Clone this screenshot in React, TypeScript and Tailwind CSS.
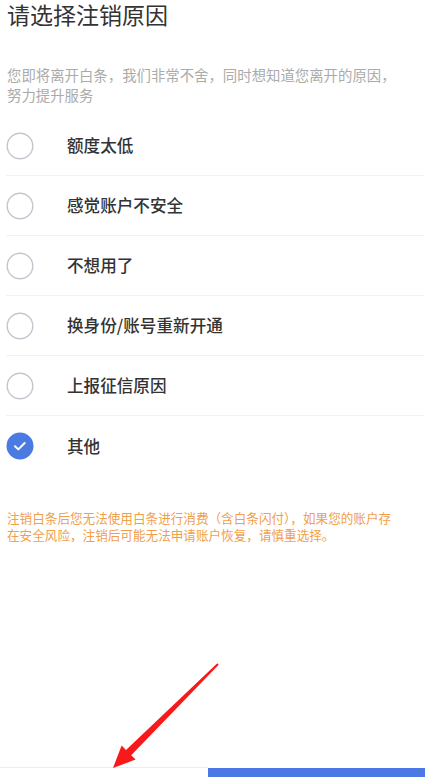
import { useState } from 'react';

const reasons = ['额度太低', '感觉账户不安全', '不想用了', '换身份/账号重新开通', '上报征信原因', '其他'];

function Radio({ checked }: { checked: boolean }) {
  if (checked) {
    return (
      <svg width="28" height="28" viewBox="0 0 28 28" className="shrink-0">
        <circle cx="14" cy="14" r="13.5" fill="#4a7be3" />
        <path d="M9 14.2l3.3 3.2 6.4-6.4" fill="none" stroke="#fff" strokeWidth="2" strokeLinecap="round" strokeLinejoin="round" />
      </svg>
    );
  }
  return (
    <svg width="28" height="28" viewBox="0 0 28 28" className="shrink-0">
      <circle cx="14" cy="14" r="12.8" fill="#fff" stroke="#c5c6d0" strokeWidth="1.4" />
    </svg>
  );
}

export default function App() {
  const [selected, setSelected] = useState(5);

  return (
    <div
      className="relative h-[777px] w-[425px] overflow-hidden bg-white flex flex-col"
      style={{ fontFamily: '"Noto Sans CJK SC", "Noto Sans", sans-serif' }}
    >
      {/* Header */}
      <h1 className="pl-[7px] text-[23px] leading-[28px] font-normal text-[#333]">请选择注销原因</h1>
      <p className="mt-[37px] pl-[7px] pr-[24px] text-[14.4px] leading-[20px] text-[#ababab]">
        您即将离开白条，我们非常不舍，同时想知道您离开的原因，努力提升服务
      </p>

      {/* Reasons */}
      <div className="mt-[11px]">
        {reasons.map((r, i) => (
          <div
            key={r}
            onClick={() => setSelected(i)}
            className="ml-[6px] h-[60px] flex items-center border-b border-[#f3f3f3] last:border-b-0 cursor-pointer"
          >
            <Radio checked={selected === i} />
            <span className="ml-[33px] text-[16.6px] font-medium text-[#333]">{r}</span>
          </div>
        ))}
      </div>

      {/* Warning */}
      <p className="mt-[33px] pl-[7px] pr-[24px] text-[12.6px] leading-[17px] text-[#f0a04b]">
        注销白条后您无法使用白条进行消费（含白条闪付），如果您的账户存在安全风险，注销后可能无法申请账户恢复，请慎重选择。
      </p>

      {/* Bottom bar */}
      <div className="mt-auto flex h-[10px]">
        <div className="w-[208px] border-t border-[#ececec] bg-white" />
        <div className="flex-1 mt-px bg-[#4a79e6]" />
      </div>

      {/* Red annotation arrow */}
      <svg className="absolute left-0 top-0 pointer-events-none" width="425" height="777" viewBox="0 0 425 777">
        <polygon
          points="217.3,663.3 218.7,664.7 131.2,755.2 135.6,759.6 113,768 121.6,745.6 126,750"
          fill="#f81a1a"
        />
      </svg>
    </div>
  );
}
